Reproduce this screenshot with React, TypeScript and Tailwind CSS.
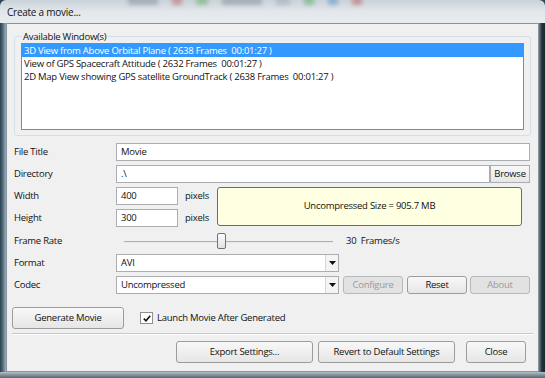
import { FC, ReactNode } from "react";

const font = "font-['Open_Sans','Liberation_Sans',sans-serif] text-[9.5px] tracking-[-0.25px] text-[#111]";

const windows = [
  "3D View from Above Orbital Plane ( 2638 Frames\u00a0\u00a000:01:27 )",
  "View of GPS Spacecraft Attitude ( 2632 Frames\u00a0\u00a000:01:27 )",
  "2D Map View showing GPS satellite GroundTrack ( 2638 Frames\u00a0\u00a000:01:27 )",
];

const Button: FC<{ children: ReactNode; className?: string; disabled?: boolean }> = ({
  children,
  className = "",
  disabled,
}) => (
  <div
    className={`flex items-center justify-center rounded-[3px] border ${
      disabled
        ? "border-[#b5b9bc] bg-[#e2e2e2] text-[#9a9a9a]"
        : "border-[#9c9c9c] bg-gradient-to-b from-[#f8f8f8] to-[#e6e6e6]"
    } ${className}`}
  >
    {children}
  </div>
);

const Input: FC<{ value: string; className?: string }> = ({ value, className = "" }) => (
  <div className={`flex h-[18px] items-center border border-[#abadb3] bg-white px-[4px] ${className}`}>
    {value}
  </div>
);

const Select: FC<{ value: string }> = ({ value }) => (
  <div className="flex h-[18px] w-[223px] border border-[#abadb3] bg-white">
    <div className="flex flex-1 items-center px-[4px]">{value}</div>
    <div className="flex w-[13px] items-center justify-center border-l border-[#d5d5d5] bg-[#f4f4f4]">
      <svg width="7" height="4" viewBox="0 0 7 4">
        <path d="M0 0h7L3.5 4z" fill="#111" />
      </svg>
    </div>
  </div>
);

const Row: FC<{ label: string; children: ReactNode; className?: string }> = ({ label, children, className = "" }) => (
  <div className={`flex items-center ${className}`}>
    <div className="w-[109px] pl-[7px]">{label}</div>
    {children}
  </div>
);

export default function App() {
  return (
    <div className={`flex h-[378px] w-[545px] flex-col overflow-hidden bg-[#2d4756] ${font}`}>
      <div className="relative flex h-[23px] items-end rounded-t-[6px] bg-gradient-to-b from-[#c9d2da] via-[#e3e7eb] to-[#e9ecef] px-[7px] pb-[3px]">
        <div className="absolute left-[128px] top-[-3px] flex gap-[14px] opacity-40 blur-[2px]">
          <span className="h-[8px] w-[30px] bg-[#6a7782]" />
          <span className="h-[8px] w-[10px] bg-[#c04040]" />
          <span className="h-[8px] w-[12px] bg-[#4aa040]" />
          <span className="h-[8px] w-[40px] bg-[#6a7782]" />
          <span className="h-[8px] w-[14px] bg-[#8a9aa6]" />
          <span className="h-[8px] w-[10px] bg-[#30a040]" />
          <span className="h-[8px] w-[10px] bg-[#3080c0]" />
          <span className="h-[8px] w-[10px] bg-[#c03030]" />
        </div>
        <span className="relative text-[10px] text-[#111]">Create a movie...</span>
      </div>
      <div className="flex h-[349px]">
        <div className="w-[6px] bg-gradient-to-r from-[#29414e] via-[#55707e] to-[#9eb0ba]" />
        <div className="flex w-[533px] flex-col border border-[#8795a0] bg-[#f0f0f0] pt-[7px]">
          <fieldset className="mx-[7px] h-[105px] rounded-[3px] border border-[#d5dfe5] px-[6px] pb-[4px]">
            <legend className="ml-[1px] px-[1px] leading-[11px]">Available Window(s)</legend>
            <div className="mt-[1px] h-[87px] border border-[#828790] bg-white">
              {windows.map((w, i) => (
                <div
                  key={w}
                  className={`h-[13px] whitespace-nowrap px-[2px] leading-[13px] ${
                    i === 0 ? "bg-[#3399ff] text-white" : ""
                  }`}
                >
                  {w}
                </div>
              ))}
            </div>
          </fieldset>

          <Row label="File Title" className="mt-[7px]">
            <Input value="Movie" className="w-[414px]" />
          </Row>
          <Row label="Directory" className="mt-[4px]">
            <Input value=".\" className="w-[374px]" />
            <Button className="h-[18px] w-[40px] rounded-none border-[#abadb3]">Browse</Button>
          </Row>
          <div className="mt-[4px] flex">
            <div className="flex flex-col gap-[4px]">
              <Row label="Width">
                <Input value="400" className="w-[62px]" />
                <span className="ml-[7px]">pixels</span>
              </Row>
              <Row label="Height">
                <Input value="300" className="w-[62px]" />
                <span className="ml-[7px]">pixels</span>
              </Row>
            </div>
            <div className="ml-[8px] flex h-[39px] w-[305px] items-center justify-center rounded-[3px] border border-[#6b6b6b] bg-[#ffffe1]">
              Uncompressed Size = 905.7 MB
            </div>
          </div>
          <Row label="Frame Rate" className="mt-[5px] h-[19px]">
            <div className="relative ml-[8px] flex h-[17px] w-[209px] items-center">
              <div className="h-[2px] w-full border-t border-[#b0b0b0] bg-[#e8e8e8]" />
              <div className="absolute left-[93px] top-[0px] h-[16px] w-[9px] rounded-[2px] border border-[#707070] bg-gradient-to-b from-[#fbfbfb] to-[#e2e2e2]" />
            </div>
            <span className="ml-[13px]">30&nbsp;&nbsp;Frames/s</span>
          </Row>
          <Row label="Format" className="mt-[3px]">
            <Select value="AVI" />
          </Row>
          <Row label="Codec" className="mt-[4px]">
            <Select value="Uncompressed" />
            <Button disabled className="ml-[4px] h-[18px] w-[60px]">
              Configure
            </Button>
            <Button className="ml-[4px] h-[18px] w-[60px]">Reset</Button>
            <Button disabled className="ml-[3px] h-[18px] w-[60px]">
              About
            </Button>
          </Row>
          <div className="mt-[13px] flex items-center pl-[5px]">
            <Button className="h-[22px] w-[112px]">Generate Movie</Button>
            <div className="ml-[16px] flex h-[12px] w-[13px] items-center justify-center border border-[#8f8f8f] bg-white">
              <svg width="8" height="7" viewBox="0 0 8 7">
                <path d="M0.8 3.6 L3 5.8 L7.2 0.8" stroke="#111" strokeWidth="1.6" fill="none" />
              </svg>
            </div>
            <span className="ml-[4px]">Launch Movie After Generated</span>
          </div>
          <div className="mx-[5px] mt-[4px] h-[2px] border-t border-[#c8c8c8] bg-white" />
          <div className="mt-[6px] flex pl-[169px]">
            <Button className="h-[22px] w-[137px]">Export Settings...</Button>
            <Button className="ml-[5px] h-[22px] w-[137px]">Revert to Default Settings</Button>
            <Button className="ml-[11px] h-[22px] w-[60px]">Close</Button>
          </div>
        </div>
        <div className="w-[6px] bg-gradient-to-r from-[#6e7f89] via-[#25323a] to-[#1c262c]" />
      </div>
      <div className="h-[6px] bg-gradient-to-b from-[#b5c0c7] to-[#56656f]" />
    </div>
  );
}
